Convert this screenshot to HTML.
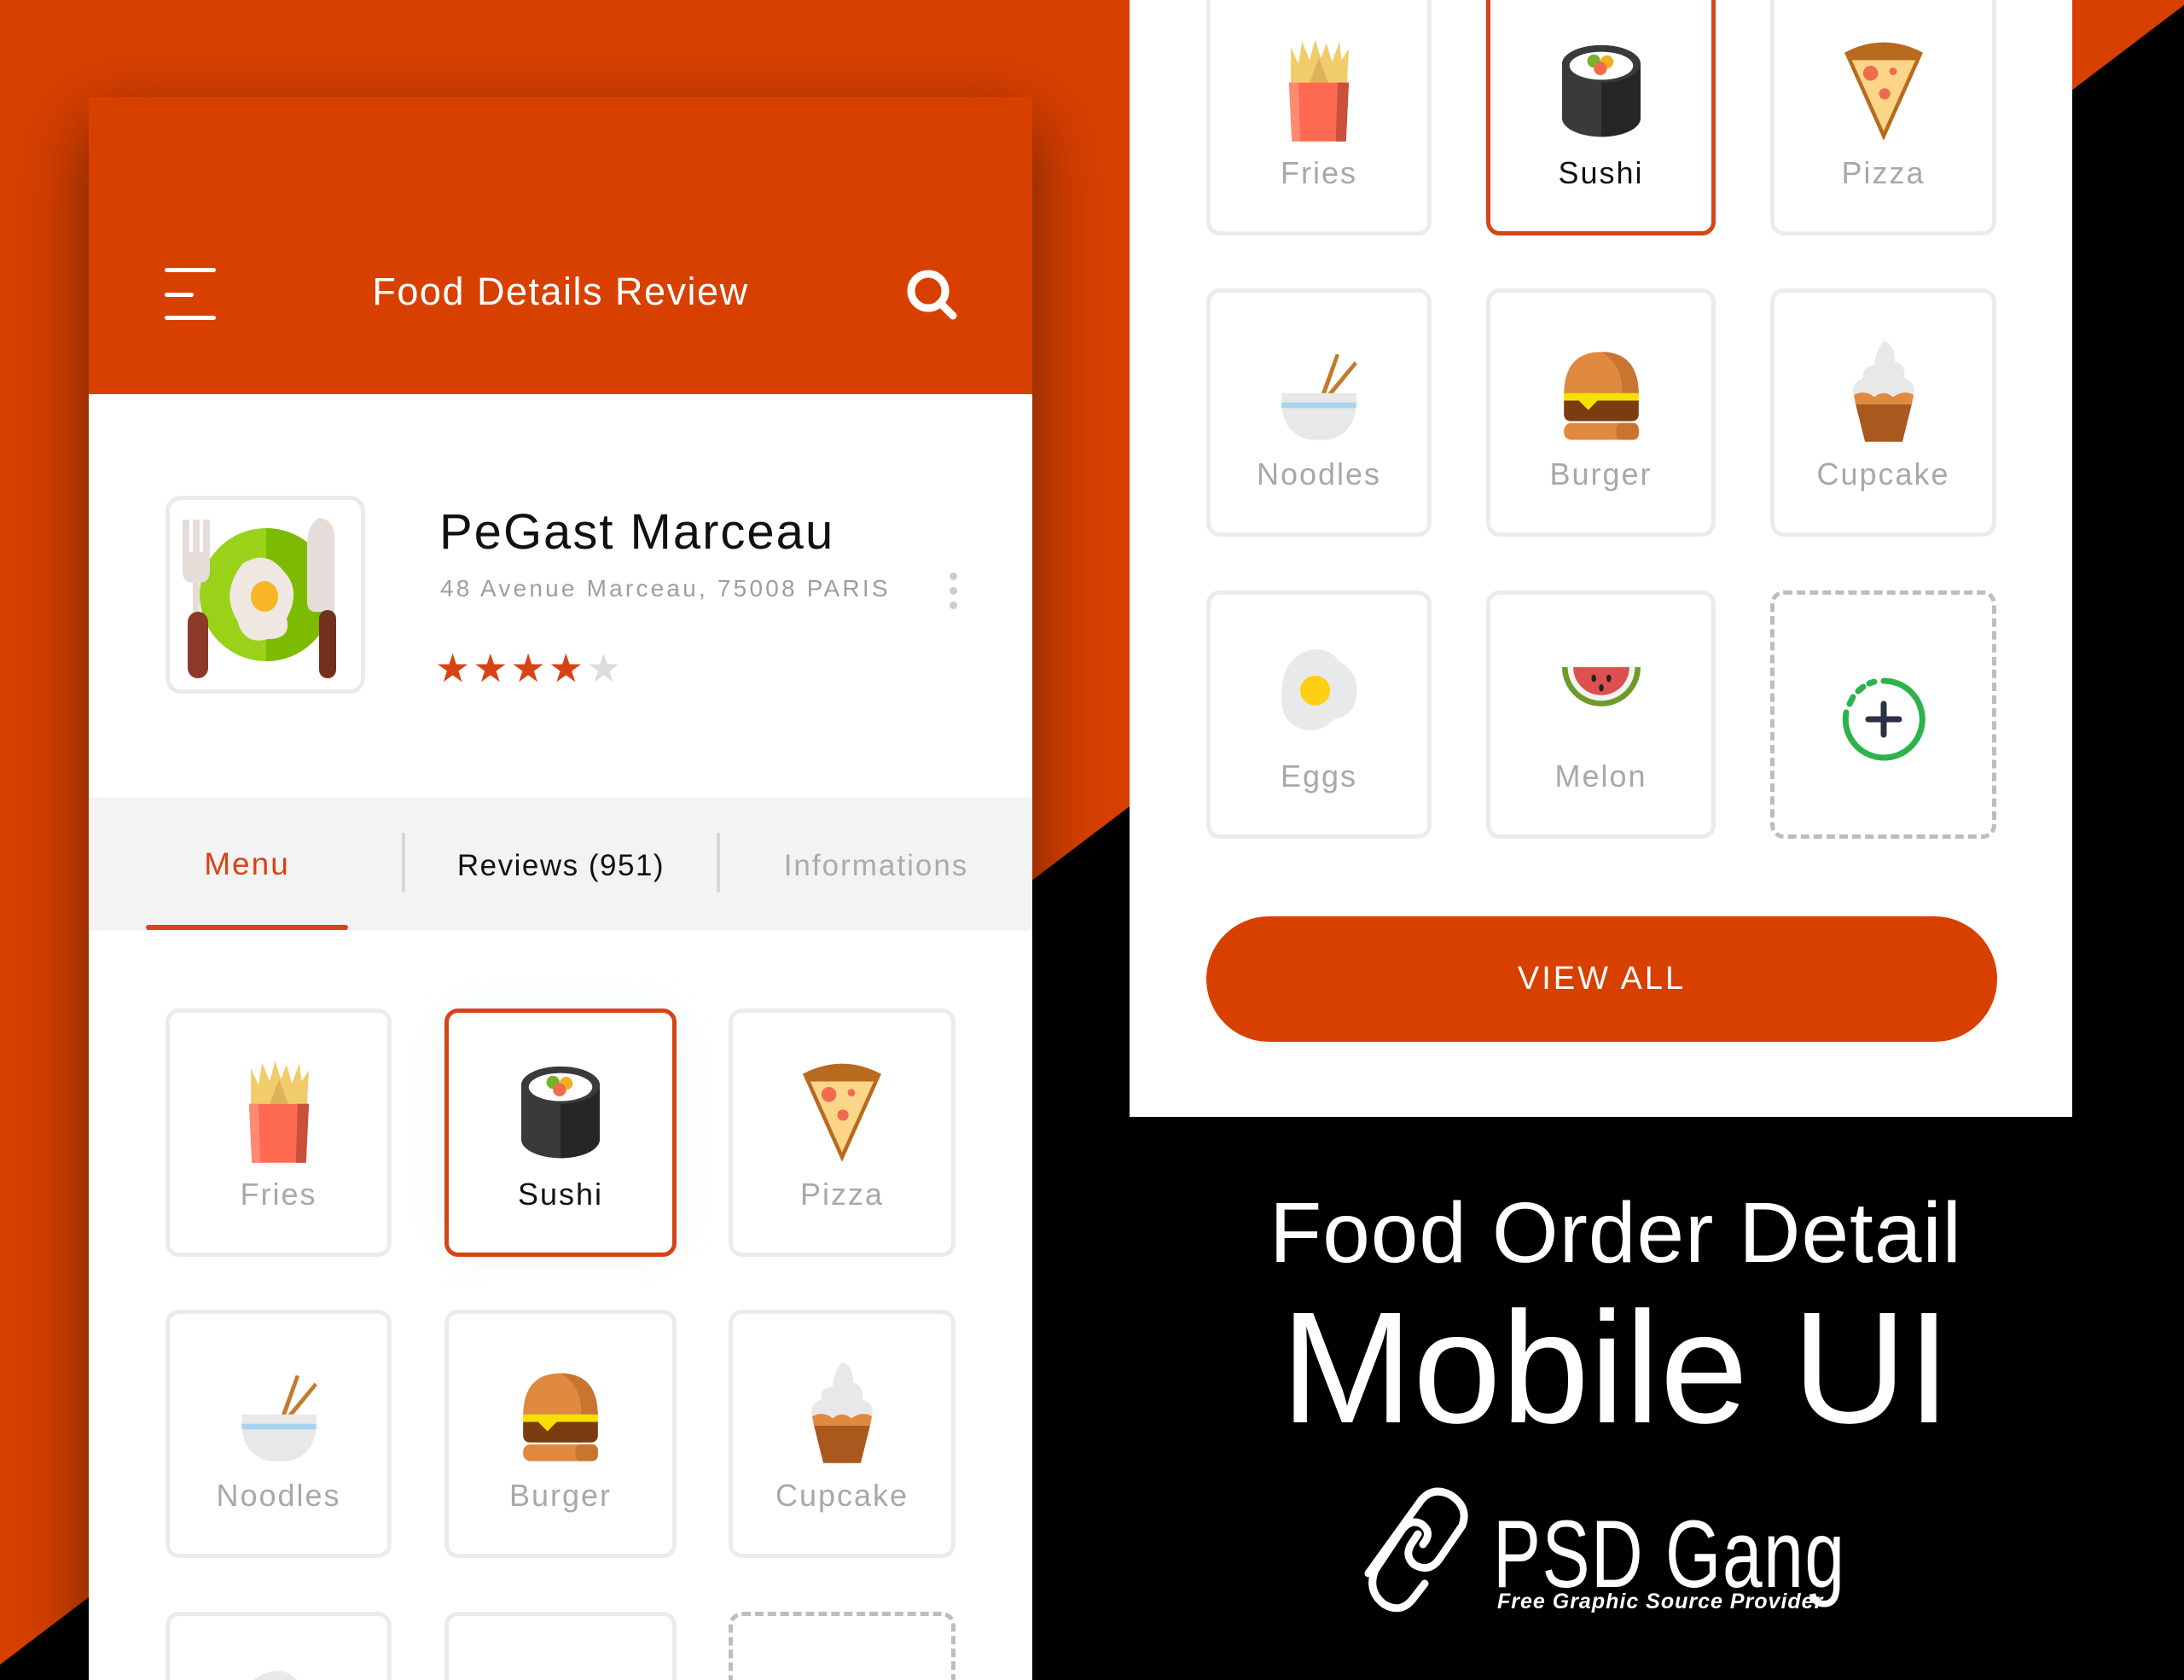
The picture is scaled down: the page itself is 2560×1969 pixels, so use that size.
<!DOCTYPE html>
<html style="overflow:hidden;height:1969px"><head><meta charset="utf-8">
<style>
*{margin:0;padding:0;box-sizing:border-box}
body{width:2560px;height:1969px;overflow:hidden;position:relative;background:#d84000;font-family:"Liberation Sans",sans-serif}
.abs{position:absolute}
.phone{position:absolute;left:104px;top:114px;width:1106px;height:1855px;background:#fff;box-shadow:0 30px 80px rgba(0,0,0,.5);overflow:hidden}
.card{position:absolute;height:291px;border:5px solid #ebebeb;border-radius:16px;background:#fff}
.card.sel{border-color:#d84315}
.card.dash{border:5px dashed #bdbdbd}
.card svg{position:absolute;left:50%;top:52px;margin-left:-55px;width:110px;height:126px}
.card .lb{position:absolute;left:0;right:0;top:188px;text-align:center;font-size:36px;letter-spacing:2px;color:#a8a8a8;line-height:50px}
.card.sel .lb{color:#111}
</style></head><body>
<svg width="0" height="0" style="position:absolute">
<defs>
<symbol id="fries" viewBox="0 0 100 115">
<path d="M20 12 L28 30 L32 6 L40 26 L46 4 L52 24 L58 8 L64 28 L72 6 L74 26 L82 14 L80 50 L20 50 Z" fill="#f0cc6a"/>
<path d="M50 24 L60 50 L40 50 Z" fill="#deb257"/>
<path d="M18 50 H82 L79 113 H21 Z" fill="#fe6a51"/>
<path d="M18 50 H28 L30 113 H21 Z" fill="#ff8a72"/>
<path d="M70 50 H82 L79 113 H68 Z" fill="#c8503d"/>
</symbol>
<symbol id="sushi" viewBox="0 0 100 115">
<path d="M8 30 A42 20 0 0 1 92 30 V88 A42 20 0 0 1 8 88 Z" fill="#3a3a3a"/>
<path d="M50 30 H92 V88 A42 20 0 0 1 50 108 Z" fill="#262626"/>
<ellipse cx="50" cy="30" rx="42" ry="20" fill="#3a3a3a"/>
<ellipse cx="50" cy="32" rx="34" ry="15" fill="#fff"/>
<circle cx="42" cy="27" r="7" fill="#7ab02e"/><circle cx="56" cy="28" r="7" fill="#f0b020"/><circle cx="49" cy="35" r="7" fill="#f46a4e"/>
</symbol>
<symbol id="pizza" viewBox="0 0 100 115">
<path d="M8 18 Q50 -4 92 18 L50 112 Z" fill="#b86a1e"/>
<path d="M16 26 L84 26 L50 102 Z" fill="#fbd588"/>
<circle cx="36" cy="40" r="8" fill="#f06a50"/><circle cx="60" cy="38" r="4" fill="#f06a50"/><circle cx="51" cy="62" r="6" fill="#f06a50"/>
</symbol>
<symbol id="noodles" viewBox="0 0 100 115">
<path d="M52 62 L68 18 L72 19 L57 62 Z M58 62 L88 26 L91 29 L64 62 Z" fill="#c47a2a"/>
<path d="M10 60 H90 V72 Q88 104 60 110 H40 Q12 104 10 72 Z" fill="#e8e8e8"/>
<rect x="10" y="70" width="80" height="6" fill="#a8d4ef"/>
</symbol>
<symbol id="burger" viewBox="0 0 100 115">
<path d="M10 62 Q10 16 50 16 Q90 16 90 62 Z" fill="#df8a3e"/>
<path d="M50 16 Q90 16 90 62 H72 Q74 30 50 16Z" fill="#c97430"/>
<rect x="10" y="60" width="80" height="9" fill="#f7e000"/>
<path d="M10 68 H90 V82 Q90 90 82 90 H18 Q10 90 10 82 Z" fill="#7a3c10"/>
<path d="M26 68 L36 78 L46 68Z" fill="#f7e000"/>
<rect x="10" y="92" width="80" height="18" rx="8" fill="#df8a3e"/>
<rect x="66" y="92" width="24" height="18" rx="6" fill="#c97430"/>
</symbol>
<symbol id="cupcake" viewBox="0 0 100 115">
<path d="M50 4 Q62 8 62 26 Q74 30 72 44 Q86 50 82 62 H18 Q14 50 28 44 Q26 32 40 30 Q40 18 50 4Z" fill="#e8e8e8"/>
<path d="M18 62 Q30 56 40 64 Q50 56 60 64 Q72 56 82 62 L80 72 H20 Z" fill="#df8a3e"/>
<path d="M20 72 H80 L70 112 H30 Z" fill="#a9581e"/>
</symbol>
<symbol id="eggs" viewBox="0 0 100 115">
<path d="M40 12 Q60 8 72 24 Q94 36 90 62 Q88 82 66 86 Q48 104 26 94 Q8 84 10 60 Q10 20 40 12Z" fill="#e9e9e9"/>
<ellipse cx="46" cy="55" rx="16" ry="16" fill="#fdd015"/>
</symbol>
<symbol id="melon" viewBox="0 0 100 115">
<path d="M8 30 H92 A42 42 0 0 1 8 30Z" fill="#6e9a2a"/>
<path d="M14 30 H86 A36 36 0 0 1 14 30Z" fill="#f5f5f5"/>
<path d="M20 30 H80 A30 30 0 0 1 20 30Z" fill="#de5050"/>
<ellipse cx="42" cy="42" rx="2.5" ry="4" fill="#222"/><ellipse cx="58" cy="42" rx="2.5" ry="4" fill="#222"/><ellipse cx="50" cy="52" rx="2.5" ry="4" fill="#222"/>
</symbol>
</defs>
</svg>

<svg class="abs" style="left:0;top:0" width="2560" height="1969"><polygon points="0,1951 2560,6 2560,1969 0,1969" fill="#000"/></svg>

<div class="phone">
  <div class="abs" style="left:0;top:0;width:1106px;height:348px;background:#d84000"></div>
  <div class="abs" style="left:89px;top:200px;width:60px;height:5px;background:#fff;border-radius:3px"></div>
  <div class="abs" style="left:89px;top:229px;width:34px;height:5px;background:#fff;border-radius:3px"></div>
  <div class="abs" style="left:89px;top:256px;width:60px;height:5px;background:#fff;border-radius:3px"></div>
  <div class="abs" style="left:0;width:1106px;top:200px;text-align:center;color:#fff;font-size:45px;letter-spacing:1.5px;line-height:56px">Food Details Review</div>
  <svg class="abs" style="left:955px;top:198px" width="70" height="66"><circle cx="29" cy="29" r="20" fill="none" stroke="#fff" stroke-width="9"/><line x1="43" y1="43" x2="58" y2="58" stroke="#fff" stroke-width="9" stroke-linecap="round"/></svg>

  <div class="abs" style="left:90px;top:467px;width:234px;height:232px;border:5px solid #eaeaea;border-radius:18px;background:#fff"></div>
  <svg class="abs" style="left:110px;top:485px" width="194" height="196" viewBox="0 0 194 196">
    <circle cx="98" cy="98" r="78" fill="#9ad21a"/>
    <path d="M98 20 A78 78 0 0 1 98 176Z" fill="#7dbb00"/>
    <path d="M70 62 Q98 44 118 70 Q140 92 122 126 Q128 150 100 150 Q72 158 64 128 Q44 96 70 62Z" fill="#efe7e2"/>
    <ellipse cx="96" cy="100" rx="16" ry="18" fill="#f6b625"/>
    <path d="M0 10 H8 V48 H12 V10 H20 V48 H24 V10 H32 V70 Q32 84 20 84 V120 H12 V84 Q0 84 0 70Z" fill="#e6dcd8"/>
    <rect x="6" y="118" width="24" height="78" rx="12" fill="#8a3a26"/>
    <path d="M160 8 Q178 10 178 30 V118 H156 Q146 118 146 106 V40 Q146 16 160 8Z" fill="#e6dcd8"/>
    <rect x="160" y="116" width="20" height="80" rx="10" fill="#73301f"/>
  </svg>
  <div class="abs" style="left:411px;top:474px;font-size:58px;letter-spacing:2px;color:#111;line-height:72px">PeGast Marceau</div>
  <div class="abs" style="left:412px;top:558px;font-size:28px;letter-spacing:3.2px;color:#9e9e9e;line-height:36px">48 Avenue Marceau, 75008 PARIS</div>
  <div class="abs" style="left:1009px;top:557px;width:9px;height:9px;border-radius:50%;background:#ccc"></div>
  <div class="abs" style="left:1009px;top:574px;width:9px;height:9px;border-radius:50%;background:#ccc"></div>
  <div class="abs" style="left:1009px;top:591px;width:9px;height:9px;border-radius:50%;background:#ccc"></div>
  <div class="abs" style="left:406px;top:644px;font-size:46px;letter-spacing:3px;color:#d84315;line-height:50px">★★★★<span style="color:#dcdcdc">★</span></div>

  <div class="abs" style="left:0;top:820px;width:1106px;height:157px;background:#f3f3f3"></div>
  <div class="abs" style="left:67px;top:876px;width:237px;text-align:center;font-size:37px;color:#d84315;letter-spacing:2px;line-height:46px">Menu</div>
  <div class="abs" style="left:67px;top:970px;width:237px;height:6px;background:#d84315;border-radius:3px"></div>
  <div class="abs" style="left:367px;top:862px;width:4px;height:70px;background:#d8d8d8"></div>
  <div class="abs" style="left:736px;top:862px;width:4px;height:70px;background:#d8d8d8"></div>
  <div class="abs" style="left:371px;top:878px;width:365px;text-align:center;font-size:35px;color:#111;letter-spacing:1.5px;line-height:46px">Reviews (951)</div>
  <div class="abs" style="left:740px;top:878px;width:366px;text-align:center;font-size:35px;color:#ababab;letter-spacing:2px;line-height:46px">Informations</div>

  <div class="card" style="left:90px;top:1068px;width:265px"><svg><use href="#fries"/></svg><div class="lb">Fries</div></div>
  <div class="card sel" style="left:417px;top:1068px;width:272px;box-shadow:0 0 40px rgba(120,200,120,.15)"><svg><use href="#sushi"/></svg><div class="lb">Sushi</div></div>
  <div class="card" style="left:750px;top:1068px;width:266px"><svg><use href="#pizza"/></svg><div class="lb">Pizza</div></div>
  <div class="card" style="left:90px;top:1421px;width:265px"><svg><use href="#noodles"/></svg><div class="lb">Noodles</div></div>
  <div class="card" style="left:417px;top:1421px;width:272px"><svg><use href="#burger"/></svg><div class="lb">Burger</div></div>
  <div class="card" style="left:750px;top:1421px;width:266px"><svg><use href="#cupcake"/></svg><div class="lb">Cupcake</div></div>
  <div class="card" style="left:90px;top:1775px;width:265px"><svg><use href="#eggs"/></svg></div>
  <div class="card" style="left:417px;top:1775px;width:272px"></div>
  <div class="card dash" style="left:750px;top:1775px;width:266px"></div>
</div>

<div class="abs" style="left:1324px;top:0;width:1105px;height:1309px;background:#fff;overflow:hidden">
  <div class="card" style="left:90px;top:-15px;width:264px"><svg><use href="#fries"/></svg><div class="lb">Fries</div></div>
  <div class="card sel" style="left:418px;top:-15px;width:269px"><svg><use href="#sushi"/></svg><div class="lb">Sushi</div></div>
  <div class="card" style="left:751px;top:-15px;width:265px"><svg><use href="#pizza"/></svg><div class="lb">Pizza</div></div>
  <div class="card" style="left:90px;top:338px;width:264px"><svg><use href="#noodles"/></svg><div class="lb">Noodles</div></div>
  <div class="card" style="left:418px;top:338px;width:269px"><svg><use href="#burger"/></svg><div class="lb">Burger</div></div>
  <div class="card" style="left:751px;top:338px;width:265px"><svg><use href="#cupcake"/></svg><div class="lb">Cupcake</div></div>
  <div class="card" style="left:90px;top:692px;width:264px"><svg><use href="#eggs"/></svg><div class="lb">Eggs</div></div>
  <div class="card" style="left:418px;top:692px;width:269px"><svg><use href="#melon"/></svg><div class="lb">Melon</div></div>
  <div class="card dash" style="left:751px;top:692px;width:265px">
    <svg style="top:96px;margin-left:-50px;width:100px;height:100px" viewBox="0 0 100 100">
      <path d="M50 5 A45 45 0 1 1 6 42" fill="none" stroke="#2db34a" stroke-width="7" stroke-linecap="round"/>
      <path d="M10 32 L14 24 M20 17 L26 12 M33 8 L39 6" stroke="#2db34a" stroke-width="7" stroke-linecap="round"/>
      <path d="M50 32 V68 M32 50 H68" stroke="#2b3148" stroke-width="7" stroke-linecap="round"/>
    </svg>
  </div>
  <div class="abs" style="left:90px;top:1074px;width:927px;height:147px;border-radius:74px;background:#d84000;color:#fff;text-align:center;line-height:147px;font-size:38px;letter-spacing:3px">VIEW ALL</div>
</div>

<div class="abs" style="left:1400px;width:988px;top:1385px;text-align:center;color:#fff;font-size:100px;line-height:120px;letter-spacing:1px">Food Order Detail</div>
<div class="abs" style="left:1400px;width:988px;top:1494px;text-align:center;color:#fff;font-size:186px;line-height:220px">Mobile UI</div>

<svg class="abs" style="left:1596px;top:1740px" width="146" height="156" viewBox="0 0 146 156">
  <g fill="none" stroke="#fff" stroke-width="9" stroke-linecap="round">
    <path d="M8 104 L70 18 Q84 2 104 12 Q126 26 118 48 L92 86"/>
    <path d="M92 86 Q80 104 62 94 Q50 84 58 70 L66 58"/>
    <path d="M72 70 Q84 56 70 46 Q58 40 48 52 L16 100 Q6 124 26 140 Q46 152 60 134 L74 116"/>
  </g>
</svg>
<div class="abs" style="left:1750px;top:1762px;color:#fff;font-size:112px;line-height:120px;transform:scaleX(.75);transform-origin:left top;letter-spacing:2px">PSD Gang</div>
<div class="abs" style="left:1755px;top:1860px;color:#fff;font-size:25px;font-style:italic;font-weight:bold;line-height:34px;letter-spacing:1px">Free Graphic Source Provider</div>
</body></html>
